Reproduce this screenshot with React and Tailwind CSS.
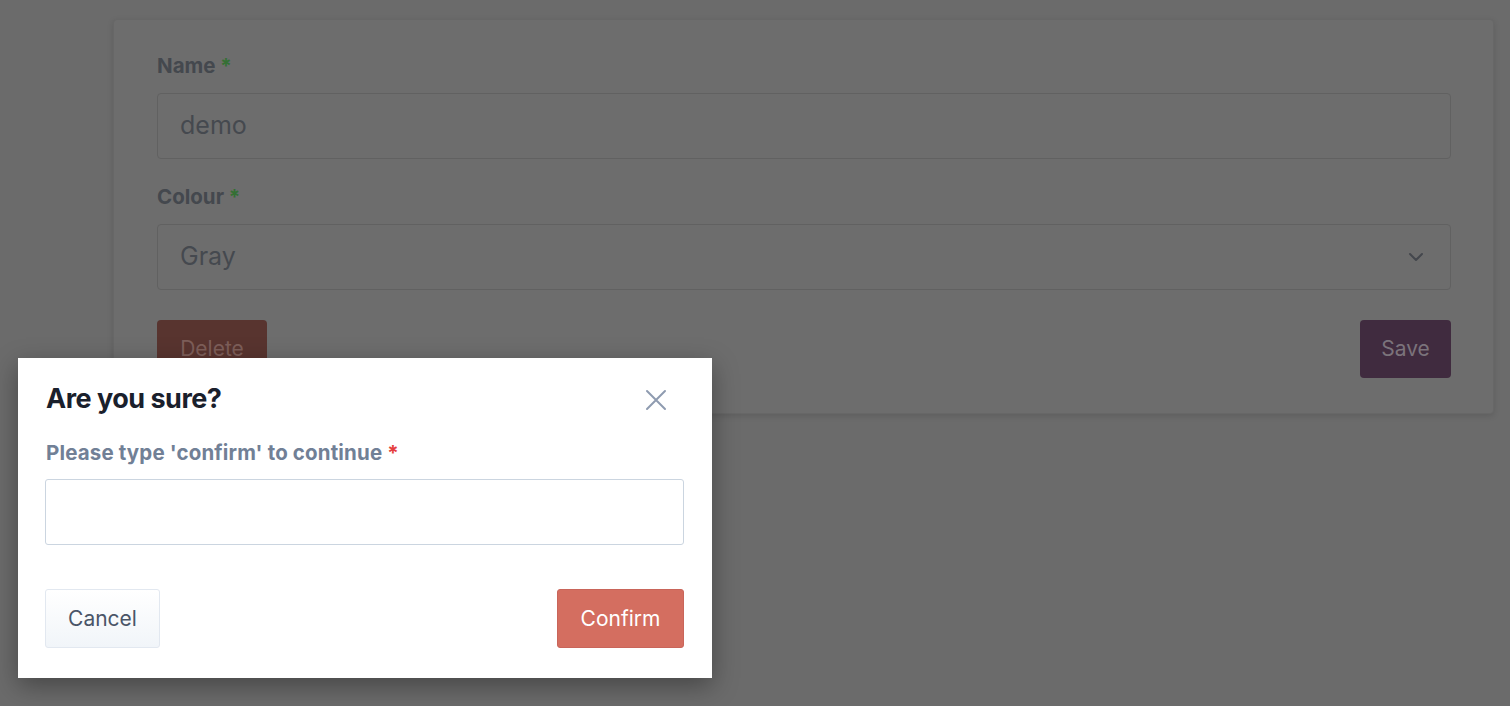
import React from 'react';

const font = { fontFamily: 'Inter, "Noto Sans", sans-serif' };

const Chevron = () => (
  <svg width="20" height="20" viewBox="0 0 20 20" fill="none" stroke="#44474d" strokeWidth="2" strokeLinecap="round" strokeLinejoin="round">
    <path d="M4 7l6 6 6-6" />
  </svg>
);

const CloseIcon = () => (
  <svg width="22" height="22" viewBox="0 0 22 22" fill="none" stroke="#8f9bb0" strokeWidth="2" strokeLinecap="round">
    <path d="M2 2l18 18M20 2L2 20" />
  </svg>
);

const App = () => {
  return (
    <div className="relative w-full h-[706px] overflow-hidden bg-[#6b6b6b]" style={font}>
      {/* Dimmed page */}
      <div className="pl-[113px] pr-[16px] pt-[19px]">
        <div className="bg-[#6d6d6d] border border-[#676767] rounded shadow-[0_2px_6px_rgba(0,0,0,0.12)] pl-[43px] pr-[42px] pt-[32px] pb-[35px]">
          <label className="block text-[20.5px] leading-[28px] font-bold text-[#44484e]">
            Name <span className="text-[#347034]">*</span>
          </label>
          <div className="mt-[13px] h-[66px] border border-[#616161] rounded flex items-center px-[22px] text-[25px] text-[#45494f]">
            demo
          </div>
          <label className="block mt-[24px] text-[20.5px] leading-[28px] font-bold text-[#44484e]">
            Colour <span className="text-[#347034]">*</span>
          </label>
          <div className="mt-[13px] h-[66px] border border-[#616161] rounded flex items-center justify-between pl-[22px] pr-[24px] text-[25px] text-[#45494f]">
            <span>Gray</span>
            <Chevron />
          </div>
          <div className="mt-[30px] flex justify-between">
            <button className="h-[58px] w-[110px] rounded bg-[#58342f] text-[21px] text-[#7d5e59]">Delete</button>
            <button className="h-[58px] w-[91px] rounded bg-[#402b3f] text-[21px] text-[#7b737b]">Save</button>
          </div>
        </div>
      </div>

      {/* Modal */}
      <div className="absolute left-[18px] top-[358px] w-[694px] h-[320px] bg-white shadow-[0_8px_24px_rgba(0,0,0,0.35)] pl-[27px] pr-[28px] pt-[23px]">
        <div className="flex items-start justify-between">
          <h2 className="pl-[1px] text-[27px] leading-[36px] font-bold text-[#1a202c] tracking-[-0.5px]">Are you sure?</h2>
          <button className="mt-[8px] mr-[17px]"><CloseIcon /></button>
        </div>
        <label className="block mt-[22px] pl-[1px] text-[20.5px] leading-[28px] font-bold text-[#718096] tracking-[0.15px]">
          Please type 'confirm' to continue <span className="text-[#e53e3e]">*</span>
        </label>
        <input className="block mt-[12px] w-full h-[66px] border border-[#cbd5e0] rounded-[3px] px-[20px] text-[22px] outline-none" />
        <div className="mt-[44px] flex justify-between">
          <button className="h-[59px] w-[115px] rounded-[3px] border border-[#e2e8f0] bg-gradient-to-b from-white to-[#f1f5f9] text-[21px] text-[#4a5568]">Cancel</button>
          <button className="ml-auto h-[59px] w-[127px] rounded-[3px] border border-[#c9655a] bg-[#d46e60] text-[21px] text-white">Confirm</button>
        </div>
      </div>
    </div>
  );
};

export default App;
